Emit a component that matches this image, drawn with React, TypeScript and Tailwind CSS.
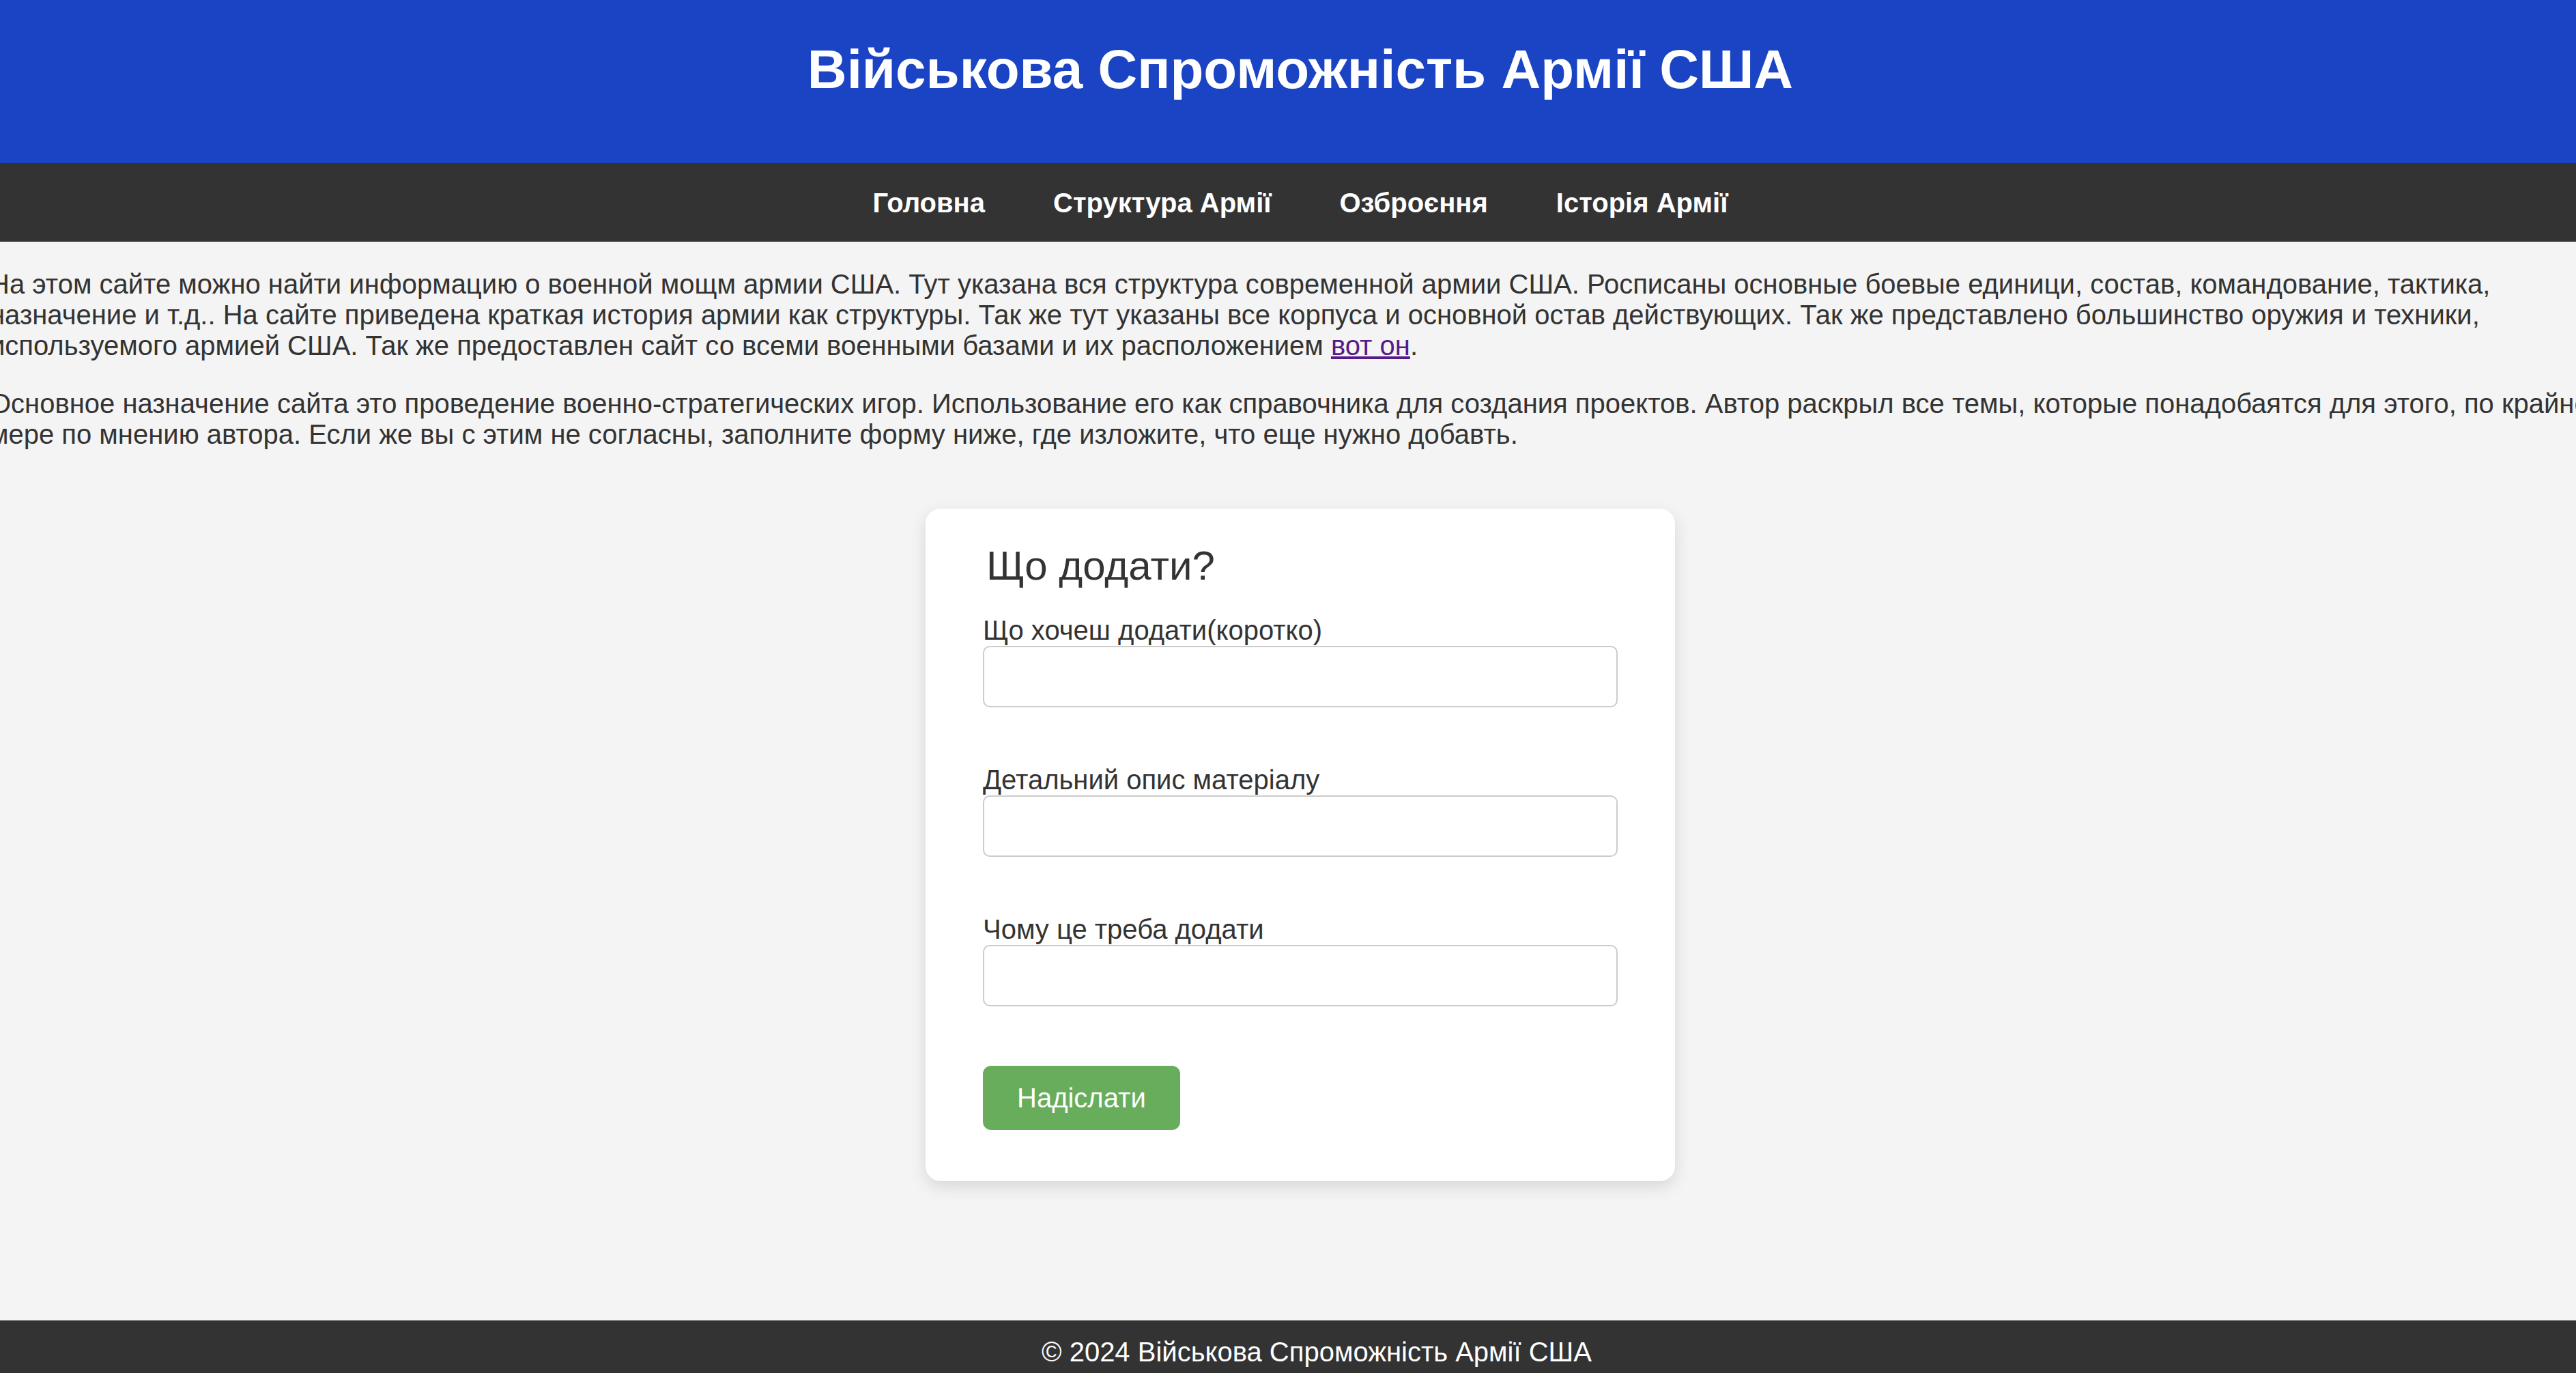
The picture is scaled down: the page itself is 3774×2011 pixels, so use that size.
import React from "react";

export default function App() {
  const font = { fontFamily: '"Liberation Sans", Arial, sans-serif' };
  return (
    <div className="w-[3774px] overflow-hidden bg-[#f4f4f4] text-[#333]" style={font}>
      <div className="-ml-[15px] w-[3840px]">
        <header className="h-[239px] bg-[#1b44c4] pt-[56px] text-center">
          <h1 className="m-0 text-[80px] font-bold leading-[92px] text-white">Військова Спроможність Армії США</h1>
        </header>
        <nav className="flex h-[115px] items-center justify-center gap-[100px] bg-[#333]">
          {["Головна", "Структура Армії", "Озброєння", "Історія Армії"].map((t) => (
            <a key={t} className="text-[40px] font-bold leading-[46px] text-white">{t}</a>
          ))}
        </nav>
        <main className="pt-[40px]">
          <p className="mb-[40px] text-[40px] leading-[45px]">
            На этом сайте можно найти информацию о военной мощм армии США. Тут указана вся структура современной армии США. Росписаны основные боевые единици, состав, командование, тактика, назначение и т.д.. На сайте приведена краткая история армии как структуры. Так же тут указаны все корпуса и основной остав действующих. Так же представлено большинство оружия и техники, используемого армией США. Так же предоставлен сайт со всеми военными базами и их расположением{" "}
            <a className="text-[#551a8b] underline">вот он</a>.
          </p>
          <p className="text-[40px] leading-[45px]">
            Основное назначение сайта это проведение военно-стратегических игор. Использование его как справочника для создания проектов. Автор раскрыл все темы, которые понадобаятся для этого, по крайней мере по мнению автора. Если же вы с этим не согласны, заполните форму ниже, где изложите, что еще нужно добавть.
          </p>
          <div className="mt-[86px] flex justify-center">
            <div className="w-[1098px] rounded-[22px] bg-white px-[84px] pb-[75px] pt-[49px] shadow-[0_8px_25px_rgba(0,0,0,0.12)]">
              <h2 className="ml-[5px] text-[60px] font-normal leading-[69px]">Що додати?</h2>
              <div className="mt-[37px] flex flex-col">
                <label className="block text-[40px] leading-[46px]">Що хочеш додати(коротко)</label>
                <input className="h-[90px] w-full rounded-[10px] border-2 border-[#ccc] bg-white" />
                <label className="mt-[83px] block text-[40px] leading-[46px]">Детальний опис матеріалу</label>
                <input className="h-[90px] w-full rounded-[10px] border-2 border-[#ccc] bg-white" />
                <label className="mt-[83px] block text-[40px] leading-[46px]">Чому це треба додати</label>
                <input className="h-[90px] w-full rounded-[10px] border-2 border-[#ccc] bg-white" />
                <div className="mt-[87px]">
                  <button className="h-[94px] rounded-[12px] bg-[#67ad5c] px-[50px] text-[40px] leading-[46px] text-white">Надіслати</button>
                </div>
              </div>
            </div>
          </div>
        </main>
        <footer className="mt-[204px] h-[96px] bg-[#333] pl-[48px] pt-[23px] text-center text-[40px] leading-[46px] text-white">
          © 2024 Військова Спроможність Армії США
        </footer>
      </div>
    </div>
  );
}
